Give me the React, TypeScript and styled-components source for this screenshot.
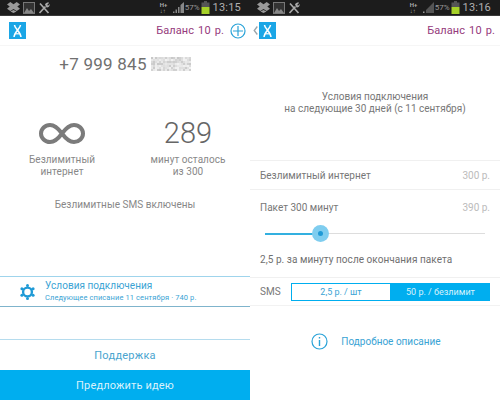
import React from "react";
import styled, { createGlobalStyle } from "styled-components";

const Global = createGlobalStyle`
  html, body { margin: 0; padding: 0; background: #fff; }
  body { width: 500px; height: 400px; overflow: hidden; font-family: Roboto, "Noto Sans", sans-serif; }
`;
const Page = styled.div`display: flex; width: 500px; height: 400px;`;
const Screen = styled.div`
  position: relative; width: 250px; height: 400px; display: flex; flex-direction: column;
  background: #fff; overflow: hidden;
`;
const StatusBar = styled.div`
  height: 15px; background: #1c1c1c; border-bottom: 1px solid #3a3a3a; display: flex; align-items: center;
  padding: 0 9px 0 7px; gap: 3px; color: #a8a8a8; flex: none;
`;
const StatusRight = styled.div`margin-left: auto; display: flex; align-items: center; gap: 1px;`;
const Pct = styled.span`font-size: 8px; color: #999;`;
const Time = styled.span`font-size: 11px; color: #b0b0b0; margin-left: 2px; letter-spacing: .2px;`;
const Net = styled.span`font-size: 6px; line-height: 6px; font-weight: 700; color: #aaa; width: 12px;`;
const Header = styled.div`
  height: 29px; padding: 0 4px 0 9px; display: flex; align-items: center; border-bottom: 1px solid #f6f6f6; flex: none;
`;
const Logo = styled.div`
  width: 17px; height: 17px; background: #1ba6e6; display: flex; align-items: center; justify-content: center;
`;
const Balance = styled.span`
  margin-left: auto; font-size: 11px; color: #953a7c; letter-spacing: .1px; word-spacing: 1.2px; padding-right: 1px;
`;
const Phone = styled.div`
  display: flex; align-items: center; justify-content: center; gap: 4px; margin-top: 5px; height: 26px;
  font-size: 17px; color: #707070; letter-spacing: .25px;
`;
const Noise = styled.svg`display: block; width: 40px; height: 14px;`;
const Stats = styled.div`display: flex; margin-top: 39px; height: 83px; flex: none;`;
const Stat = styled.div<{ $w: number; $l: number }>`
  width: ${p => p.$w}px; margin-left: ${p => p.$l}px; display: flex; flex-direction: column; align-items: center;
`;
const Big = styled.div`
  height: 34px; display: flex; align-items: center; justify-content: center; font-size: 29px; font-weight: 300; color: #666;
`;
const StatText = styled.div`
  font-size: 10px; line-height: 12px; color: #888; text-align: center; margin-top: 4px; letter-spacing: .05px;
`;
const Center = styled.div`
  font-size: 10px; color: #888; text-align: center; letter-spacing: .03px; height: 12px; line-height: 12px; flex: none;
`;
const Conditions = styled.div`
  margin-top: 65px; height: 29px; border-top: 1px solid #9fd4ec; border-bottom: 1px solid #7fb4cc;
  display: flex; align-items: center; padding-left: 20px; gap: 10px; flex: none;
`;
const CondText = styled.div`display: flex; flex-direction: column; gap: 1px;`;
const CondTitle = styled.div`font-size: 10px; line-height: 12px; color: #3aa3d4; letter-spacing: .05px;`;
const CondSub = styled.div`font-size: 7.5px; line-height: 10px; color: #3aa3d4; letter-spacing: .1px;`;
const Support = styled.div`
  margin-top: 32px; height: 30px; border-top: 1px solid #b5dcee; display: flex; align-items: center; justify-content: center;
  font-size: 11px; color: #4aa5cf; letter-spacing: .25px; flex: none;
`;
const Idea = styled.div`
  height: 30px; background: #00aeef; color: #d8f2fc; display: flex; align-items: center; justify-content: center;
  font-size: 11px; letter-spacing: .15px; flex: none;
`;
const Back = styled.svg`position: absolute; left: 3px; top: 26px; width: 5px; height: 9px;`;
const Intro = styled.div`
  margin-top: 45px; font-size: 10px; line-height: 12px; color: #777; text-align: center; height: 69px; flex: none;
`;
const Row = styled.div<{ $tall?: boolean }>`
  height: ${p => (p.$tall ? 35 : 28)}px; border-top: 1px solid #f0f0f0; padding: 0 10px; display: flex; align-items: center;
  justify-content: space-between; font-size: 10px; color: #777; flex: none;
`;
const Price = styled.span`color: #bbb;`;
const SliderWrap = styled.div`position: relative; height: 25px; margin: 0 15px; flex: none;`;
const Track = styled.div`position: absolute; left: 0; right: 0; top: 8px; height: 1px; background: #ddd;`;
const Fill = styled.div`position: absolute; left: 0; top: 7.5px; height: 2px; background: #33b0e0;`;
const Knob = styled.div`
  position: absolute; top: 0; width: 17px; height: 17px; margin-left: -8.5px; border-radius: 50%; background: #7fcdef;
  display: flex; align-items: center; justify-content: center;
  &::after { content: ""; width: 5px; height: 5px; border-radius: 50%; background: #1f9ad6; }
`;
const Note = styled.div`
  padding: 3px 10px 0; height: 24px; font-size: 10px; line-height: 14px; color: #707070; letter-spacing: .05px; flex: none;
`;
const SmsRow = styled.div`
  border-top: 1px solid #f0f0f0; border-bottom: 1px solid #f2f2f2; height: 27px; padding: 0 10px; display: flex; align-items: center;
  font-size: 10px; color: #777; flex: none;
`;
const Segments = styled.div`display: flex; margin-left: auto; width: 199px; height: 18px;`;
const Segment = styled.div<{ $on?: boolean }>`
  flex: none; width: ${p => (p.$on ? 99 : 100)}px; display: flex; align-items: center; justify-content: center; font-size: 9px;
  color: ${p => (p.$on ? "#d8f2fc" : "#3aa3d4")}; background: ${p => (p.$on ? "#00aeef" : "#fff")};
  border: 1px solid #00aeef; box-sizing: border-box;
`;
const More = styled.div`
  display: flex; align-items: center; justify-content: center; gap: 13px; margin-top: 25px; height: 20px;
  font-size: 10px; color: #3aa3d4; padding-left: 2px; flex: none;
`;

const noiseCells = Array.from({ length: 140 }, (_, i) => {
  const v = Math.abs(Math.sin(i * 12.9898) * 43758.5453) % 1;
  const shade = Math.round(200 + v * 42);
  return { x: (i % 20) * 2, y: Math.floor(i / 20) * 2, fill: `rgb(${shade},${shade},${shade})` };
});

const StatusIcons = () => (
  <>
    <svg width="13" height="11" viewBox="0 0 13 11"><path fill="#999" d="M3.3 0 6.5 2.2 9.7 0 13 2.400 10.300 4.600 13 6.800 9.700 9 6.500 7 3.300 9 0 6.800 2.700 4.600 0 2.400ZM3.400 9.600 6.500 7.900 9.600 9.600 6.500 11Z"/></svg>
    <svg width="12" height="12" viewBox="0 0 12 12"><rect width="12" height="12" fill="#777"/><rect x="1" y="1" width="10" height="10" fill="#333"/><path fill="#888" d="M1 11 4 6l2 3 2-2 3 4Z"/></svg>
    <svg width="12" height="12" viewBox="0 0 12 12">
      <path stroke="#aaa" strokeWidth="1.700" fill="none" d="M1.500 11 7.500 4.500M2 1.500l8.500 9.500" />
      <path fill="#aaa" d="M7 2.500C8 .8 9.800.3 11.200.8L9.300 2.800 10 3.700 11.700 2C12 3.700 10.800 5.600 8.600 5.600Z" />
    </svg>
  </>
);
const StatusRightPart = ({ time, weak }: { time: string; weak?: boolean }) => (
  <StatusRight>
    <Net>H+<br />↓↑</Net>
    <svg width="11" height="11" viewBox="0 0 11 11">
      {weak
        ? <><path fill="#999" d="M0 9.500h1.500V11H0Z" /><path fill="#555" d="M3 11V8L11 0V11Z" /></>
        : <path fill="#888" d="M0 11h1.500V9.500H0ZM2.500 11H4V7.500H2.500ZM5 11h1.500V5H5ZM7.500 11H11V0L7.500 3Z" />}
    </svg>
    <Pct>57%</Pct>
    <svg width="9" height="13" viewBox="0 0 9 13"><path fill="#555" d="M3 0h3v1.500h2.500V6H.5V1.500H3Z"/><path fill="#a6d128" d="M.5 6h8v7h-8Z"/></svg>
    <Time>{time}</Time>
  </StatusRight>
);
const LogoMark = () => (
  <Logo>
    <svg width="9" height="12" viewBox="0 0 9 12">
      <path fill="none" stroke="#fff" strokeWidth="1.500" d="M1.500 0C1.500 3.500 7.500 6.500 8 12M7.500 0C7.500 3.500 1.500 6.500 1 12" />
      <path stroke="#fff" strokeWidth="1.200" d="M2 8.800h5" />
    </svg>
  </Logo>
);

export default function App() {
  return (
    <Page>
      <Global />
      <Screen>
        <StatusBar><StatusIcons /><StatusRightPart time="13:15" /></StatusBar>
        <Header>
          <LogoMark />
          <Balance>Баланс 10 р.</Balance>
          <svg width="16" height="16" viewBox="0 0 16 16" style={{ marginLeft: 5 }}>
            <circle cx="8" cy="8" r="7" fill="none" stroke="#2aa3d8" strokeWidth="1.200" />
            <path stroke="#2aa3d8" strokeWidth="1.200" d="M8 3v10M3 8h10" />
          </svg>
        </Header>
        <Phone>
          +7 999 845
          <Noise viewBox="0 0 40 14">
            {noiseCells.map((c, i) => <rect key={i} x={c.x} y={c.y} width="2" height="2" fill={c.fill} />)}
          </Noise>
        </Phone>
        <Stats>
          <Stat $w={90} $l={17}>
            <Big>
              <svg width="46" height="21" viewBox="0 0 46 21">
                <path fill="none" stroke="#7b7b7b" strokeWidth="4" d="M23 10.500C19 5 15 2 11 2 6 2 2 6 2 10.500S6 19 11 19c4 0 8-3 12-8.500S31 2 35 2c5 0 9 4 9 8.500S40 19 35 19c-4 0-8-3-12-8.500Z" />
              </svg>
            </Big>
            <StatText>Безлимитный<br />интернет</StatText>
          </Stat>
          <Stat $w={90} $l={36}>
            <Big>289</Big>
            <StatText>минут осталось<br />из 300</StatText>
          </Stat>
        </Stats>
        <Center>Безлимитные SMS включены</Center>
        <Conditions>
          <svg width="15" height="16" viewBox="0 0 15 16">
            <circle cx="7.500" cy="8" r="4.400" fill="#fff" stroke="#1f9ad6" strokeWidth="2.400" />
            <g fill="#1f9ad6">
              <circle cx="7.500" cy="1.600" r="1.500" />
              <circle cx="7.500" cy="14.400" r="1.500" />
              <circle cx="1.900" cy="4.800" r="1.500" />
              <circle cx="13.100" cy="4.800" r="1.500" />
              <circle cx="1.900" cy="11.200" r="1.500" />
              <circle cx="13.100" cy="11.200" r="1.500" />
            </g>
          </svg>
          <CondText>
            <CondTitle>Условия подключения</CondTitle>
            <CondSub>Следующее списание 11 сентября · 740 р.</CondSub>
          </CondText>
        </Conditions>
        <Support>Поддержка</Support>
        <Idea>Предложить идею</Idea>
      </Screen>
      <Screen>
        <StatusBar><StatusIcons /><StatusRightPart time="13:16" weak /></StatusBar>
        <Header>
          <Back viewBox="0 0 5 9"><path fill="none" stroke="#9aa4aa" strokeWidth="1.300" d="M4.300.5 1.200 4.500 4.300 8.500" /></Back>
          <LogoMark />
          <Balance>Баланс 10 р.</Balance>
        </Header>
        <Intro>Условия подключения<br />на следующие 30 дней (с 11 сентября)</Intro>
        <Row>Безлимитный интернет<Price>300 р.</Price></Row>
        <Row $tall>Пакет 300 минут<Price>390 р.</Price></Row>
        <SliderWrap>
          <Track />
          <Fill style={{ width: 55 }} />
          <Knob style={{ left: 55 }} />
        </SliderWrap>
        <Note>2,5 р. за минуту после окончания пакета</Note>
        <SmsRow>
          SMS
          <Segments>
            <Segment>2,5 р. / шт</Segment>
            <Segment $on>50 р. / безлимит</Segment>
          </Segments>
        </SmsRow>
        <More>
          <svg width="17" height="17" viewBox="0 0 17 17">
            <circle cx="8.500" cy="8.500" r="7.500" fill="none" stroke="#2aa3d8" strokeWidth="1.200" />
            <path stroke="#2aa3d8" strokeWidth="1.400" d="M8.500 7v6M8.500 4v1.500" />
          </svg>
          Подробное описание
        </More>
      </Screen>
    </Page>
  );
}
